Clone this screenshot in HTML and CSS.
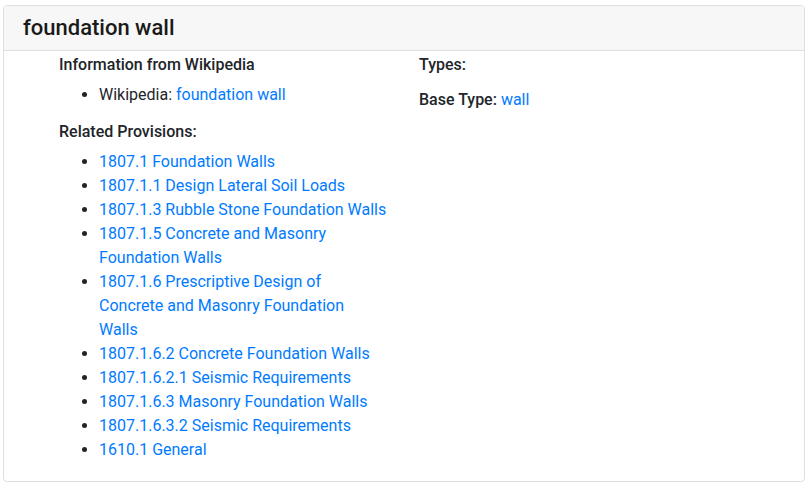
FILE: index.html
```html
<!DOCTYPE html>
<html>
<head>
<meta charset="utf-8">
<link rel="stylesheet" href="styles.css">
</head>
<body>
<div class="card">
  <div class="card-header"><h4 class="title">foundation wall</h4></div>
  <div class="card-body">
    <div class="col">
      <h6 class="label">Information from Wikipedia</h6>
      <ul class="list">
        <li>Wikipedia: <a href="#">foundation wall</a></li>
      </ul>
      <h6 class="label">Related Provisions:</h6>
      <ul class="list">
        <li><a href="#">1807.1 Foundation Walls</a></li>
        <li><a href="#">1807.1.1 Design Lateral Soil Loads</a></li>
        <li><a href="#">1807.1.3 Rubble Stone Foundation Walls</a></li>
        <li><a href="#">1807.1.5 Concrete and Masonry Foundation Walls</a></li>
        <li><a href="#">1807.1.6 Prescriptive Design of Concrete and Masonry Foundation<br>Walls</a></li>
        <li><a href="#">1807.1.6.2 Concrete Foundation Walls</a></li>
        <li><a href="#">1807.1.6.2.1 Seismic Requirements</a></li>
        <li><a href="#">1807.1.6.3 Masonry Foundation Walls</a></li>
        <li><a href="#">1807.1.6.3.2 Seismic Requirements</a></li>
        <li><a href="#">1610.1 General</a></li>
      </ul>
    </div>
    <div class="col">
      <h6 class="label">Types:</h6>
      <p class="base"><span class="label-inline">Base Type:</span> <a href="#">wall</a></p>
    </div>
  </div>
</div>
</body>
</html>
```
FILE: styles.css
```css
* { box-sizing: border-box; }
body {
  margin: 0;
  padding: 5px 5px 6px 3px;
  font-family: Roboto, "Liberation Sans", sans-serif;
  font-size: 16px;
  line-height: 24px;
  color: #212529;
  background: #fff;
}
a { color: #007bff; text-decoration: none; }
.card {
  border: 1px solid #dfdfdf;
  border-radius: 4px;
  height: 477px;
  overflow: hidden;
}
.card-header {
  background: #f7f7f7;
  border-bottom: 1px solid #dfdfdf;
  height: 45px;
  padding: 0 19px;
  display: flex;
  align-items: center;
}
.title {
  margin: 0;
  font-size: 22px;
  font-weight: 500;
  line-height: 28px;
  color: #1a1a1a;
}
.card-body {
  display: flex;
  padding: 2px 0 0 55px;
}
.col { width: 360px; padding-right: 32px; }
.label {
  margin: 0;
  font-size: 16px;
  font-weight: 500;
  line-height: 24px;
}
.list {
  margin: 6px 0 13px;
  padding-left: 40px;
}
.base { margin: 11px 0 0; }
.label-inline { font-weight: 500; }
```
